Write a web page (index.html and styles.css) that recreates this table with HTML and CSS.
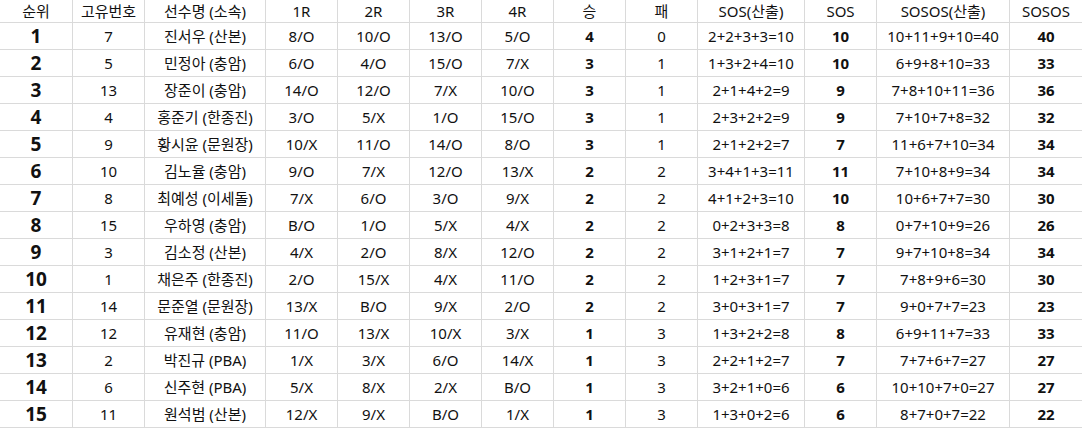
FILE: index.html
```html
<!DOCTYPE html>
<html lang="ko">
<head>
<meta charset="utf-8">
<link rel="stylesheet" href="styles.css">
</head>
<body>
<div class="tbl">
  <div class="row head"><div class="c">순위</div><div class="c">고유번호</div><div class="c">선수명 (소속)</div><div class="c">1R</div><div class="c">2R</div><div class="c">3R</div><div class="c">4R</div><div class="c">승</div><div class="c">패</div><div class="c">SOS(산출)</div><div class="c">SOS</div><div class="c">SOSOS(산출)</div><div class="c">SOSOS</div></div>
  <div class="row"><div class="c rank">1</div><div class="c">7</div><div class="c">진서우 (산본)</div><div class="c">8/O</div><div class="c">10/O</div><div class="c">13/O</div><div class="c">5/O</div><div class="c b">4</div><div class="c">0</div><div class="c">2+2+3+3=10</div><div class="c b">10</div><div class="c">10+11+9+10=40</div><div class="c b">40</div></div>
  <div class="row"><div class="c rank">2</div><div class="c">5</div><div class="c">민정아 (충암)</div><div class="c">6/O</div><div class="c">4/O</div><div class="c">15/O</div><div class="c">7/X</div><div class="c b">3</div><div class="c">1</div><div class="c">1+3+2+4=10</div><div class="c b">10</div><div class="c">6+9+8+10=33</div><div class="c b">33</div></div>
  <div class="row"><div class="c rank">3</div><div class="c">13</div><div class="c">장준이 (충암)</div><div class="c">14/O</div><div class="c">12/O</div><div class="c">7/X</div><div class="c">10/O</div><div class="c b">3</div><div class="c">1</div><div class="c">2+1+4+2=9</div><div class="c b">9</div><div class="c">7+8+10+11=36</div><div class="c b">36</div></div>
  <div class="row"><div class="c rank">4</div><div class="c">4</div><div class="c">홍준기 (한종진)</div><div class="c">3/O</div><div class="c">5/X</div><div class="c">1/O</div><div class="c">15/O</div><div class="c b">3</div><div class="c">1</div><div class="c">2+3+2+2=9</div><div class="c b">9</div><div class="c">7+10+7+8=32</div><div class="c b">32</div></div>
  <div class="row"><div class="c rank">5</div><div class="c">9</div><div class="c">황시윤 (문원장)</div><div class="c">10/X</div><div class="c">11/O</div><div class="c">14/O</div><div class="c">8/O</div><div class="c b">3</div><div class="c">1</div><div class="c">2+1+2+2=7</div><div class="c b">7</div><div class="c">11+6+7+10=34</div><div class="c b">34</div></div>
  <div class="row"><div class="c rank">6</div><div class="c">10</div><div class="c">김노율 (충암)</div><div class="c">9/O</div><div class="c">7/X</div><div class="c">12/O</div><div class="c">13/X</div><div class="c b">2</div><div class="c">2</div><div class="c">3+4+1+3=11</div><div class="c b">11</div><div class="c">7+10+8+9=34</div><div class="c b">34</div></div>
  <div class="row"><div class="c rank">7</div><div class="c">8</div><div class="c">최예성 (이세돌)</div><div class="c">7/X</div><div class="c">6/O</div><div class="c">3/O</div><div class="c">9/X</div><div class="c b">2</div><div class="c">2</div><div class="c">4+1+2+3=10</div><div class="c b">10</div><div class="c">10+6+7+7=30</div><div class="c b">30</div></div>
  <div class="row"><div class="c rank">8</div><div class="c">15</div><div class="c">우하영 (충암)</div><div class="c">B/O</div><div class="c">1/O</div><div class="c">5/X</div><div class="c">4/X</div><div class="c b">2</div><div class="c">2</div><div class="c">0+2+3+3=8</div><div class="c b">8</div><div class="c">0+7+10+9=26</div><div class="c b">26</div></div>
  <div class="row"><div class="c rank">9</div><div class="c">3</div><div class="c">김소정 (산본)</div><div class="c">4/X</div><div class="c">2/O</div><div class="c">8/X</div><div class="c">12/O</div><div class="c b">2</div><div class="c">2</div><div class="c">3+1+2+1=7</div><div class="c b">7</div><div class="c">9+7+10+8=34</div><div class="c b">34</div></div>
  <div class="row"><div class="c rank">10</div><div class="c">1</div><div class="c">채은주 (한종진)</div><div class="c">2/O</div><div class="c">15/X</div><div class="c">4/X</div><div class="c">11/O</div><div class="c b">2</div><div class="c">2</div><div class="c">1+2+3+1=7</div><div class="c b">7</div><div class="c">7+8+9+6=30</div><div class="c b">30</div></div>
  <div class="row"><div class="c rank">11</div><div class="c">14</div><div class="c">문준열 (문원장)</div><div class="c">13/X</div><div class="c">B/O</div><div class="c">9/X</div><div class="c">2/O</div><div class="c b">2</div><div class="c">2</div><div class="c">3+0+3+1=7</div><div class="c b">7</div><div class="c">9+0+7+7=23</div><div class="c b">23</div></div>
  <div class="row"><div class="c rank">12</div><div class="c">12</div><div class="c">유재현 (충암)</div><div class="c">11/O</div><div class="c">13/X</div><div class="c">10/X</div><div class="c">3/X</div><div class="c b">1</div><div class="c">3</div><div class="c">1+3+2+2=8</div><div class="c b">8</div><div class="c">6+9+11+7=33</div><div class="c b">33</div></div>
  <div class="row"><div class="c rank">13</div><div class="c">2</div><div class="c">박진규 (PBA)</div><div class="c">1/X</div><div class="c">3/X</div><div class="c">6/O</div><div class="c">14/X</div><div class="c b">1</div><div class="c">3</div><div class="c">2+2+1+2=7</div><div class="c b">7</div><div class="c">7+7+6+7=27</div><div class="c b">27</div></div>
  <div class="row"><div class="c rank">14</div><div class="c">6</div><div class="c">신주현 (PBA)</div><div class="c">5/X</div><div class="c">8/X</div><div class="c">2/X</div><div class="c">B/O</div><div class="c b">1</div><div class="c">3</div><div class="c">3+2+1+0=6</div><div class="c b">6</div><div class="c">10+10+7+0=27</div><div class="c b">27</div></div>
  <div class="row"><div class="c rank">15</div><div class="c">11</div><div class="c">원석범 (산본)</div><div class="c">12/X</div><div class="c">9/X</div><div class="c">B/O</div><div class="c">1/X</div><div class="c b">1</div><div class="c">3</div><div class="c">1+3+0+2=6</div><div class="c b">6</div><div class="c">8+7+0+7=22</div><div class="c b">22</div></div>
</div>
</body>
</html>
```

FILE: styles.css
```css
html, body {
  margin: 0;
  padding: 0;
  background: #ffffff;
}

body {
  font-family: "Noto Sans", "Noto Sans CJK KR", sans-serif;
  font-size: 15px;
  color: #111111;
  overflow: hidden;
}

.tbl {
  display: grid;
  grid-template-columns: 72px 71px 120px 71px 71px 71px 71px 71px 71px 106px 71px 132px 72px;
  grid-template-rows: 22px repeat(15, 26px);
  gap: 1px;
  padding-bottom: 1px;
  background: #dadada;
  width: 1082px;
}

.row {
  display: contents;
}

.c {
  background: #ffffff;
  display: flex;
  align-items: center;
  justify-content: center;
  line-height: 1;
  white-space: nowrap;
  overflow: hidden;
}

.head .c {
  padding-top: 1px;
}

.rank {
  font-weight: 700;
  font-size: 19px;
}

.b {
  font-weight: 700;
}
```
